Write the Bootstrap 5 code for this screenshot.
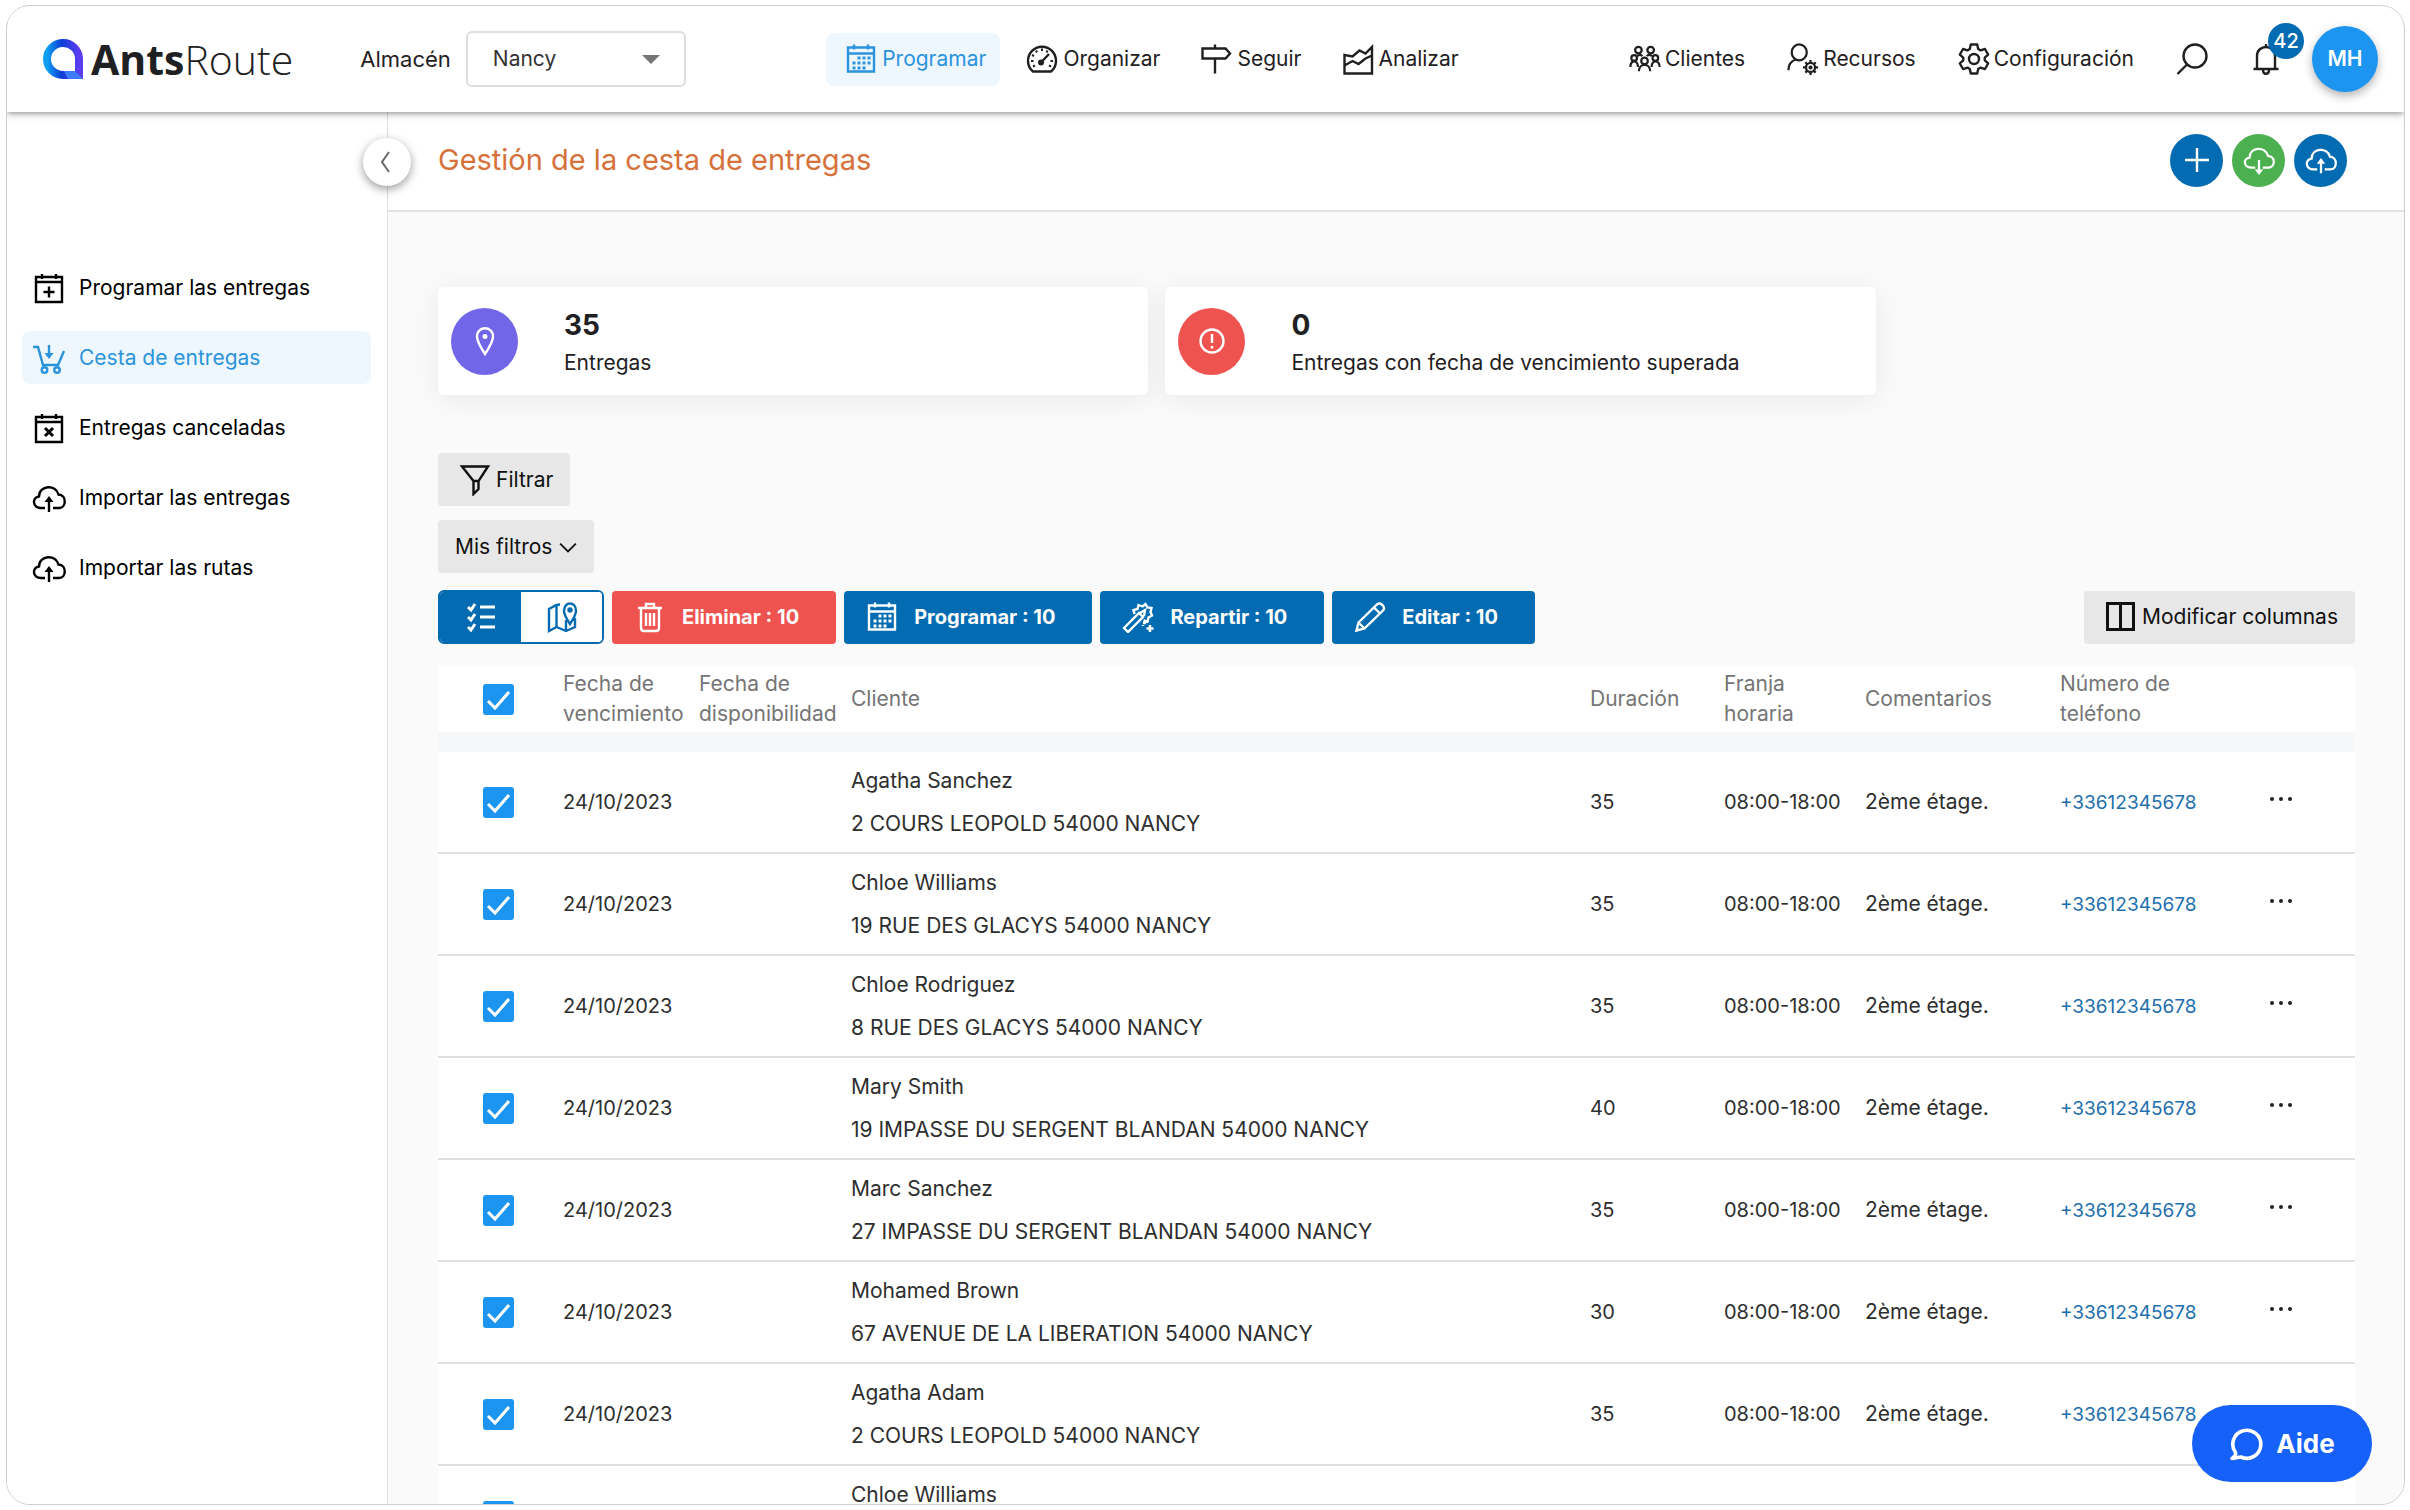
<!DOCTYPE html>
<html lang="es">
<head>
<meta charset="utf-8">
<meta name="viewport" content="width=device-width, initial-scale=1">
<title>AntsRoute - Gestión de la cesta de entregas</title>
<link href="https://cdn.jsdelivr.net/npm/bootstrap@5.3.0/dist/css/bootstrap.min.css" rel="stylesheet">
<style>
:root{--ar-blue:#036bb1;--ar-sky:#1c95f0;--ar-soft:#eef7fe;--ar-grey:#e7e7e7;--ar-ink:#1f2022}
body{font-family:Inter,"Open Sans",sans-serif;font-size:21px;line-height:30px;color:var(--ar-ink);background:#fff;height:100vh;padding:5px 5px 5px 6px;overflow:hidden}
a{text-decoration:none}
.ico{width:32px;height:32px;flex:none;fill:none;stroke:currentColor;stroke-width:2.4}
.frame{height:100%;border:1px solid #cfcfcf;border-radius:24px;overflow:hidden}
.topbar{height:106px;padding:0 26px 0 36px;box-shadow:0 1px 7px rgba(0,0,0,.5);z-index:3;position:relative;background:#fff}
.brand{font-family:"Open Sans",sans-serif;font-size:41px;line-height:48px;font-weight:300;color:var(--ar-ink);margin-right:67px}
.brand b{font-weight:700}
.brand svg{width:40px;height:40px}
.depot-label{font-size:22px;margin-right:15px}
.depot{width:220px;height:56px;font-size:21px;padding:0 25px;border:2px solid #dedede;border-radius:6px;color:#333;background-image:url("data:image/svg+xml,%3Csvg xmlns='http://www.w3.org/2000/svg' viewBox='0 0 18 9'%3E%3Cpath d='M0 0h18L9 9z' fill='%23757575'/%3E%3C/svg%3E");background-size:18px 9px;background-position:right 24px center}
.topnav{gap:7px}
.topnav .nav-link{height:53px;padding:0 14px 0 19px;gap:5px;color:var(--ar-ink);border-radius:8px}
.topnav .nav-link.active{background:var(--ar-soft);color:#2b93dc}
.tools{gap:42px}
.tools .nav-link{color:var(--ar-ink);gap:4px;padding:0}
.account{gap:30px}
.avatar{width:66px;height:66px;background:var(--ar-sky);color:#fff;font-weight:600;box-shadow:0 4px 10px rgba(0,0,0,.3)}
.alerts{width:36px;height:36px;top:-20px;left:18px;background:var(--ar-blue);color:#fff;font-size:20px;font-weight:500}
.below{min-height:0}
.side{width:381px;flex:none;border-right:1px solid #dedede;padding:149px 16px 0 15px;background:#fff;position:relative}
.side .nav{gap:17px}
.side .nav-link{height:53px;padding:0 10px;gap:13px;color:#000;border-radius:8px}
.side .nav-link.active{background:var(--ar-soft);color:#2b93dc}
.side .ico{width:34px;height:34px}
.fold{position:absolute;right:-24px;top:26px;width:48px;height:48px;background:#fff;border:0;box-shadow:0 3px 10px rgba(0,0,0,.4);z-index:2;color:#666}
.fold .ico{width:24px;height:24px}
.workspace{background:#fafafa;min-width:0}
.titlebar{height:100px;background:#fff;border-bottom:2px solid #e2e2e2;padding:0 57px 2px 50px}
.titlebar h1{font-size:29px;font-weight:400;color:#d6713b;margin:0}
.quick{gap:9px}
.round-btn{width:53px;height:53px;border:0;color:#fff;background:var(--ar-blue);padding:0}
.round-btn.green{background:#4caf50}
.content{padding:75px 49px 0 50px}
.stats{gap:17px;width:75%}
.stat{flex:1 1 0;height:108px;border:0;border-radius:6px;box-shadow:0 4px 28px rgba(30,30,60,.07);padding:0 13px;gap:46px;flex-direction:row}
.stat-dot{width:67px;height:67px;color:#fff;flex:none}
.stat-dot.violet{background:#7165e8}
.stat-dot.coral{background:#ef5350}
.stat-text{gap:4px;padding-top:2px}
.stat strong{font-size:28px;line-height:38px;font-weight:700}
.filters{margin-top:58px;gap:14px}
.btn-soft{height:53px;background:var(--ar-grey);border:0;border-radius:4px;font-size:21px;padding:0 17px 0 21px;color:#111;gap:5px}
.btn-soft.mine{padding:0 17px;gap:7px}
.chev{width:18px;height:18px}
.bar{margin-top:17px}
.btn-act{height:53px;border:0;border-radius:4px;color:#fff;font-weight:700;font-size:20px;padding:0 37px 0 22px;gap:16px;background:var(--ar-blue)}
.btn-act.red{background:#ef5350}
.btn-act:hover,.btn-soft:hover{color:#fff;background:#345}
.view{height:54px;border:2px solid var(--ar-blue);border-radius:6px;overflow:hidden}
.view button{width:81px;border:0;background:#fff;color:var(--ar-blue);padding:0}
.view button.on{background:var(--ar-blue);color:#fff}
.orders{table-layout:fixed;width:100%;border-collapse:separate;border-spacing:0;background:#f6f7f9;margin-top:22px}
.orders th,.orders td{background:#fff;padding:0 0 0 8px;white-space:nowrap;vertical-align:middle}
.orders th{height:66px;font-weight:400;color:#757575}
.orders tbody::before{content:"";display:block;height:20px}
.orders td{height:102px;border-bottom:2px solid #dfdfdf;color:#2e2e2e}
.orders td.num{font-size:20px}
.orders td span{display:block;line-height:43px}
.orders .tick{width:31px;height:31px;margin:0 0 0 37px;display:block;border:0;border-radius:3px}
.orders .tick:checked{background:var(--ar-sky) url("data:image/svg+xml,%3Csvg xmlns='http://www.w3.org/2000/svg' viewBox='0 0 31 31'%3E%3Cpath d='M5 17l7 7L26 8' fill='none' stroke='%23fff' stroke-width='3'/%3E%3C/svg%3E") center/100% no-repeat}
.orders a{color:#1f6fae;font-size:19px}
.c-tick{width:117px}.c-venc{width:136px}.c-disp{width:152px}.c-dur{width:134px}.c-fran{width:141px}.c-com{width:195px}.c-tel{width:209px}.c-more{width:94px}
.more{border:0;background:none;padding:0 0 6px;color:#222;display:flex}
.dots{width:24px;height:8px}
.help{position:fixed;right:38px;bottom:28px;width:180px;height:77px;background:#1561f9;color:#fff;font-size:26px;font-weight:700;border:0;gap:13px;z-index:5}
.help .ico{width:34px;height:34px;stroke-width:3.6}
</style>
</head>
<body>
<svg width="0" height="0" class="position-absolute" aria-hidden="true">
<defs>
<linearGradient id="lg" x1="0" y1="0" x2="1" y2="0"><stop offset="0" stop-color="#0fa0f2"/><stop offset=".45" stop-color="#0b3fd6"/><stop offset="1" stop-color="#5b3cf0"/></linearGradient>
<symbol id="cal" viewBox="0 0 32 32"><path d="M3 4.500h26v24H3zM3 10.500h26M9 1.500v5M23 1.500v5"/><g stroke-width="3" stroke-dasharray="3 2"><path d="M12.500 15h13"/><path d="M7.500 20h18"/><path d="M7.500 25h13"/></g></symbol>
<symbol id="gauge" viewBox="0 0 32 32"><path d="M7 28.500a14 14 0 1 1 18 0zM14.500 20L23 11"/><circle cx="15" cy="19.500" r="1.800" fill="currentColor"/><path stroke-width="2" d="M16 5.500v2.500M10 7.500l1 2M6 12l2 1M5 18h2.500M7 23.500l2-1M21.500 7.500l-1 2M27 18h-2.500M25 23.500l-2-1"/></symbol>
<symbol id="sign" viewBox="0 0 32 32"><path d="M2.500 5.500h23l4.500 5-4.500 5h-23zM15 1.500v4M15 15.500v15"/></symbol>
<symbol id="chart" viewBox="0 0 32 32"><path d="M2.500 12v18.500h27.500V4l-6.500 6.500-6-3-7 6zM2.500 22.500l8-4.500 6 3 7-5.500 6.500-3"/></symbol>
<symbol id="people" viewBox="0 0 34 32"><circle cx="10" cy="6.500" r="3.500"/><circle cx="23" cy="6.500" r="3.500"/><circle cx="5.500" cy="15" r="3"/><circle cx="16.500" cy="18" r="3.500"/><circle cx="28" cy="15" r="3"/><path d="M1.500 24.500c0-8 8-8 8 0M24 24.500c0-8 8.500-8 8.500 0M10.500 29c0-9 12-9 12 0M9 13c1-2 4-2 5 0M19 13c1-2 4-2 5 0"/></symbol>
<symbol id="usergear" viewBox="0 0 34 34"><ellipse cx="13" cy="10" rx="8" ry="8.500"/><path d="M1.500 29c0-6 3-10 8-11.500"/><circle cx="25" cy="26" r="4.800"/><circle cx="25" cy="26" r="1" fill="currentColor"/><path d="M25 18v3M25 31v3M17 26h3M30 26h3M19.500 20.500l2 2M28.500 29.500l2 2M19.500 31.500l2-2M28.500 22.500l2-2"/></symbol>
<symbol id="gear" viewBox="0 0 32 32"><path stroke-linejoin="round" d="M11.800 6L12.800 1.500L19.200 1.500L20.200 6L22.560 7.360L26.960 5.980L30.160 11.520L26.760 14.640L26.760 17.360L30.160 20.480L26.960 26.020L22.560 24.640L20.200 26L19.200 30.500L12.800 30.500L11.800 26L9.440 24.640L5.040 26.020L1.840 20.480L5.240 17.360L5.240 14.640L1.840 11.520L5.040 5.980L9.440 7.360z"/><circle cx="16" cy="16" r="5"/></symbol>
<symbol id="search" viewBox="0 0 32 32"><circle cx="19" cy="13" r="11.500"/><path d="M11 21.500L1.500 31"/></symbol>
<symbol id="bell" viewBox="0 0 32 32"><path d="M7 26V13c0-12 18-12 18 0v13M3.500 26h25M13 27c0 5 6 5 6 0M16 1v3"/></symbol>
<symbol id="cloudup" viewBox="0 0 34 34"><path d="M13 27H9C0 27 0 16 7 15.500 7 4 24 3 26.500 13.500 35 14 34.500 27 27 27h-6M17 31V19"/><path d="M17 15l4.500 6h-9z" fill="currentColor" stroke="none"/></symbol>
<symbol id="clouddown" viewBox="0 0 34 34"><path d="M13 25H9C0 25 0 15 7 14.500 7 3 24 2 26.500 12.500 35 13 34.500 25 27 25h-6M17 17v12"/><path d="M17 33l4.500-6h-9z" fill="currentColor" stroke="none"/></symbol>
<symbol id="calplus" viewBox="0 0 34 34"><path d="M4 6h26v25H4zM4 11h26M10 3v5M24 3v5M11.500 21h11M17 15.500v11"/></symbol>
<symbol id="calx" viewBox="0 0 34 34"><path d="M4 6h26v25H4zM4 11h26M10 3v5M24 3v5"/><path stroke-width="3" d="M13 17l8 8M21 17l-8 8"/></symbol>
<symbol id="cart" viewBox="0 0 34 34"><path d="M1 6h5l5 18h15l6-14M17 4v10"/><path d="M17 18l4.500-6h-9z" fill="currentColor" stroke="none"/><circle cx="12.500" cy="29" r="2.800"/><circle cx="25" cy="29" r="2.800"/></symbol>
<symbol id="funnel" viewBox="0 0 32 32"><path d="M3 2.500h26L19.500 17v8l-5 5V17L3 2.500zM14 17h6"/></symbol>
<symbol id="down" viewBox="0 0 16 16"><path stroke-width="1.600" d="M1 5l7 7 7-7"/></symbol>
<symbol id="left" viewBox="0 0 24 24"><path stroke-width="2" d="M14 2L7 12l7 10"/></symbol>
<symbol id="list" viewBox="0 0 32 32"><path d="M15 6h15M15 16h15M15 26h15M3 6l3 3 4-6M3 16l3 3 4-6M3 26l3 3 4-6" stroke-width="3"/></symbol>
<symbol id="map" viewBox="0 0 32 32"><path d="M14 3.500L10.500 4 3 8v22l7.500-4 9.500 4 9-4V17M10.500 4v22M20 19v11M24 23c-4-6-6-9-6-13 0-10 12-10 12 0 0 4-2 7-6 13z"/><circle cx="24" cy="9" r="1.500" fill="currentColor"/></symbol>
<symbol id="trash" viewBox="0 0 32 32"><path d="M7 7v20q0 3 3 3h12q3 0 3-3V7M4 7h24M12 7V3h8v4M12 12v13M16 12v13M20 12v13"/></symbol>
<symbol id="wand" viewBox="0 0 32 32"><path d="M2 27L17 12l4 4L6 31zM12.500 13l-1-4 4-1 1-4 4 1.500L23.500 3l2 3.500 4 .5-1 4 1.500 3.500-3.500 2-1 4-4-1M18 12l5-3-1 6M21 22h3M28 24v7M24.500 27.500h7M21 24v1"/></symbol>
<symbol id="pencil" viewBox="0 0 32 32"><path d="M2.500 29.500l2-8L23 3.500c4-3 9 3 6 6L10.500 27.500zM4.500 21.500l6 6M20 6.500l6 6"/></symbol>
<symbol id="columns" viewBox="0 0 32 32"><path stroke-width="3" d="M2.500 2.500h26v26h-26zM15.500 2.500v26"/></symbol>
<symbol id="pin" viewBox="0 0 32 32"><path d="M16 29C10 20 8 16 8 11.500c0-11 16-11 16 0C24 16 22 20 16 29z"/><circle cx="16" cy="11.500" r="1.300" fill="currentColor"/></symbol>
<symbol id="excl" viewBox="0 0 32 32"><circle cx="16" cy="16" r="11.500"/><path d="M16 9v9M16 21v2.500"/></symbol>
<symbol id="plus" viewBox="0 0 32 32"><path d="M4 16h24M16 4v24"/></symbol>
<symbol id="dots" viewBox="0 0 24 8"><g fill="currentColor" stroke="none"><circle cx="3" cy="4" r="2"/><circle cx="12" cy="4" r="2"/><circle cx="21" cy="4" r="2"/></g></symbol>
<symbol id="chat" viewBox="0 0 34 34"><path stroke-linejoin="round" d="M3 31.500c3-2 4-4 3.500-6A14 14 0 1 1 12 30c-3 0-6 1.500-9 1.500z"/></symbol>
</defs>
</svg>
<div class="frame d-flex flex-column">
<header class="topbar d-flex align-items-center justify-content-between flex-shrink-0">
  <div class="d-flex align-items-center">
    <a href="#" class="brand d-flex align-items-center"><svg viewBox="0 0 40 40" class="me-2" aria-hidden="true"><path d="M36 36V19A16 16 0 1 0 20 36h16z" fill="none" stroke="url(#lg)" stroke-width="8"/><path d="M21 32h11l8 8H25z" fill="#3d7bff"/></svg><span><b>Ants</b>Route</span></a>
    <label for="depot" class="depot-label">Almacén</label>
    <select id="depot" class="form-select depot"><option>Nancy</option></select>
  </div>
  <nav class="nav topnav me-3">
    <a href="#" class="nav-link active d-flex align-items-center"><svg class="ico"><use href="#cal"/></svg>Programar</a>
    <a href="#" class="nav-link d-flex align-items-center"><svg class="ico"><use href="#gauge"/></svg>Organizar</a>
    <a href="#" class="nav-link d-flex align-items-center"><svg class="ico"><use href="#sign"/></svg>Seguir</a>
    <a href="#" class="nav-link d-flex align-items-center"><svg class="ico"><use href="#chart"/></svg>Analizar</a>
  </nav>
  <nav class="nav tools align-items-center">
    <a href="#" class="nav-link d-flex align-items-center"><svg class="ico"><use href="#people"/></svg>Clientes</a>
    <a href="#" class="nav-link d-flex align-items-center"><svg class="ico"><use href="#usergear"/></svg>Recursos</a>
    <a href="#" class="nav-link d-flex align-items-center"><svg class="ico"><use href="#gear"/></svg>Configuración</a>
    <a href="#" class="nav-link d-flex" aria-label="Buscar"><svg class="ico"><use href="#search"/></svg></a>
    <div class="account d-flex align-items-center">
      <a href="#" class="nav-link d-flex position-relative" aria-label="Avisos"><svg class="ico"><use href="#bell"/></svg><span class="alerts position-absolute rounded-circle d-flex align-items-center justify-content-center">42</span></a>
      <a href="#" class="avatar rounded-circle d-flex align-items-center justify-content-center">MH</a>
    </div>
  </nav>
</header>
<div class="below d-flex flex-grow-1">
<aside class="side">
  <button type="button" class="fold rounded-circle d-flex align-items-center justify-content-center" aria-label="Plegar menú"><svg class="ico"><use href="#left"/></svg></button>
  <nav class="nav flex-column">
    <a href="#" class="nav-link d-flex align-items-center"><svg class="ico"><use href="#calplus"/></svg>Programar las entregas</a>
    <a href="#" class="nav-link active d-flex align-items-center"><svg class="ico"><use href="#cart"/></svg>Cesta de entregas</a>
    <a href="#" class="nav-link d-flex align-items-center"><svg class="ico"><use href="#calx"/></svg>Entregas canceladas</a>
    <a href="#" class="nav-link d-flex align-items-center"><svg class="ico"><use href="#cloudup"/></svg>Importar las entregas</a>
    <a href="#" class="nav-link d-flex align-items-center"><svg class="ico"><use href="#cloudup"/></svg>Importar las rutas</a>
  </nav>
</aside>
<main class="workspace flex-grow-1 overflow-hidden">
  <div class="titlebar d-flex align-items-center justify-content-between">
    <h1>Gestión de la cesta de entregas</h1>
    <div class="quick d-flex">
      <button type="button" class="round-btn rounded-circle" aria-label="Añadir"><svg class="ico"><use href="#plus"/></svg></button>
      <button type="button" class="round-btn green rounded-circle" aria-label="Descargar"><svg class="ico"><use href="#clouddown"/></svg></button>
      <button type="button" class="round-btn rounded-circle" aria-label="Importar"><svg class="ico"><use href="#cloudup"/></svg></button>
    </div>
  </div>
  <div class="content">
    <div class="stats d-flex">
      <div class="card stat align-items-center"><span class="stat-dot violet rounded-circle d-flex align-items-center justify-content-center"><svg class="ico"><use href="#pin"/></svg></span><div class="stat-text d-flex flex-column"><strong>35</strong><span>Entregas</span></div></div>
      <div class="card stat align-items-center"><span class="stat-dot coral rounded-circle d-flex align-items-center justify-content-center"><svg class="ico"><use href="#excl"/></svg></span><div class="stat-text d-flex flex-column"><strong>0</strong><span>Entregas con fecha de vencimiento superada</span></div></div>
    </div>
    <div class="filters d-flex flex-column align-items-start">
      <button type="button" class="btn btn-soft d-flex align-items-center"><svg class="ico"><use href="#funnel"/></svg>Filtrar</button>
      <button type="button" class="btn btn-soft mine d-flex align-items-center">Mis filtros <svg class="ico chev"><use href="#down"/></svg></button>
    </div>
    <div class="bar d-flex align-items-center gap-2">
      <div class="view d-flex" role="group" aria-label="Vista"><button type="button" class="on" aria-label="Lista"><svg class="ico"><use href="#list"/></svg></button><button type="button" aria-label="Mapa"><svg class="ico"><use href="#map"/></svg></button></div>
      <button type="button" class="btn btn-act red d-flex align-items-center"><svg class="ico"><use href="#trash"/></svg>Eliminar : 10</button>
      <button type="button" class="btn btn-act d-flex align-items-center"><svg class="ico"><use href="#cal"/></svg>Programar : 10</button>
      <button type="button" class="btn btn-act d-flex align-items-center"><svg class="ico"><use href="#wand"/></svg>Repartir : 10</button>
      <button type="button" class="btn btn-act d-flex align-items-center"><svg class="ico"><use href="#pencil"/></svg>Editar : 10</button>
      <button type="button" class="btn btn-soft d-flex align-items-center ms-auto"><svg class="ico"><use href="#columns"/></svg>Modificar columnas</button>
    </div>
    <table class="orders">
      <colgroup><col class="c-tick"><col class="c-venc"><col class="c-disp"><col><col class="c-dur"><col class="c-fran"><col class="c-com"><col class="c-tel"><col class="c-more"></colgroup>
      <thead><tr><th><input type="checkbox" class="form-check-input tick" checked aria-label="Seleccionar todo"></th><th>Fecha de<br>vencimiento</th><th>Fecha de<br>disponibilidad</th><th>Cliente</th><th>Duración</th><th>Franja<br>horaria</th><th>Comentarios</th><th>Número de<br>teléfono</th><th></th></tr></thead>
      <tbody>
      <tr><td><input type="checkbox" class="form-check-input tick" checked aria-label="Agatha Sanchez"></td><td class="num">24/10/2023</td><td></td><td><span>Agatha Sanchez</span><span>2 COURS LEOPOLD 54000 NANCY</span></td><td class="num">35</td><td class="num">08:00-18:00</td><td>2ème étage.</td><td><a href="tel:+33612345678">+33612345678</a></td><td><button type="button" class="more" aria-label="Más"><svg class="ico dots"><use href="#dots"/></svg></button></td></tr>
      <tr><td><input type="checkbox" class="form-check-input tick" checked aria-label="Chloe Williams"></td><td class="num">24/10/2023</td><td></td><td><span>Chloe Williams</span><span>19 RUE DES GLACYS 54000 NANCY</span></td><td class="num">35</td><td class="num">08:00-18:00</td><td>2ème étage.</td><td><a href="tel:+33612345678">+33612345678</a></td><td><button type="button" class="more" aria-label="Más"><svg class="ico dots"><use href="#dots"/></svg></button></td></tr>
      <tr><td><input type="checkbox" class="form-check-input tick" checked aria-label="Chloe Rodriguez"></td><td class="num">24/10/2023</td><td></td><td><span>Chloe Rodriguez</span><span>8 RUE DES GLACYS 54000 NANCY</span></td><td class="num">35</td><td class="num">08:00-18:00</td><td>2ème étage.</td><td><a href="tel:+33612345678">+33612345678</a></td><td><button type="button" class="more" aria-label="Más"><svg class="ico dots"><use href="#dots"/></svg></button></td></tr>
      <tr><td><input type="checkbox" class="form-check-input tick" checked aria-label="Mary Smith"></td><td class="num">24/10/2023</td><td></td><td><span>Mary Smith</span><span>19 IMPASSE DU SERGENT BLANDAN 54000 NANCY</span></td><td class="num">40</td><td class="num">08:00-18:00</td><td>2ème étage.</td><td><a href="tel:+33612345678">+33612345678</a></td><td><button type="button" class="more" aria-label="Más"><svg class="ico dots"><use href="#dots"/></svg></button></td></tr>
      <tr><td><input type="checkbox" class="form-check-input tick" checked aria-label="Marc Sanchez"></td><td class="num">24/10/2023</td><td></td><td><span>Marc Sanchez</span><span>27 IMPASSE DU SERGENT BLANDAN 54000 NANCY</span></td><td class="num">35</td><td class="num">08:00-18:00</td><td>2ème étage.</td><td><a href="tel:+33612345678">+33612345678</a></td><td><button type="button" class="more" aria-label="Más"><svg class="ico dots"><use href="#dots"/></svg></button></td></tr>
      <tr><td><input type="checkbox" class="form-check-input tick" checked aria-label="Mohamed Brown"></td><td class="num">24/10/2023</td><td></td><td><span>Mohamed Brown</span><span>67 AVENUE DE LA LIBERATION 54000 NANCY</span></td><td class="num">30</td><td class="num">08:00-18:00</td><td>2ème étage.</td><td><a href="tel:+33612345678">+33612345678</a></td><td><button type="button" class="more" aria-label="Más"><svg class="ico dots"><use href="#dots"/></svg></button></td></tr>
      <tr><td><input type="checkbox" class="form-check-input tick" checked aria-label="Agatha Adam"></td><td class="num">24/10/2023</td><td></td><td><span>Agatha Adam</span><span>2 COURS LEOPOLD 54000 NANCY</span></td><td class="num">35</td><td class="num">08:00-18:00</td><td>2ème étage.</td><td><a href="tel:+33612345678">+33612345678</a></td><td></td></tr>
      <tr><td><input type="checkbox" class="form-check-input tick" checked aria-label="Chloe Williams"></td><td class="num">24/10/2023</td><td></td><td><span>Chloe Williams</span><span>19 RUE DES GLACYS 54000 NANCY</span></td><td class="num">35</td><td class="num">08:00-18:00</td><td>2ème étage.</td><td><a href="tel:+33612345678">+33612345678</a></td><td></td></tr>
      </tbody>
    </table>
  </div>
</main>
</div>
</div>
<button type="button" class="help rounded-pill d-flex align-items-center justify-content-center"><svg class="ico"><use href="#chat"/></svg>Aide</button>
<script src="https://cdn.jsdelivr.net/npm/bootstrap@5.3.0/dist/js/bootstrap.bundle.min.js"></script>
</body>
</html>
